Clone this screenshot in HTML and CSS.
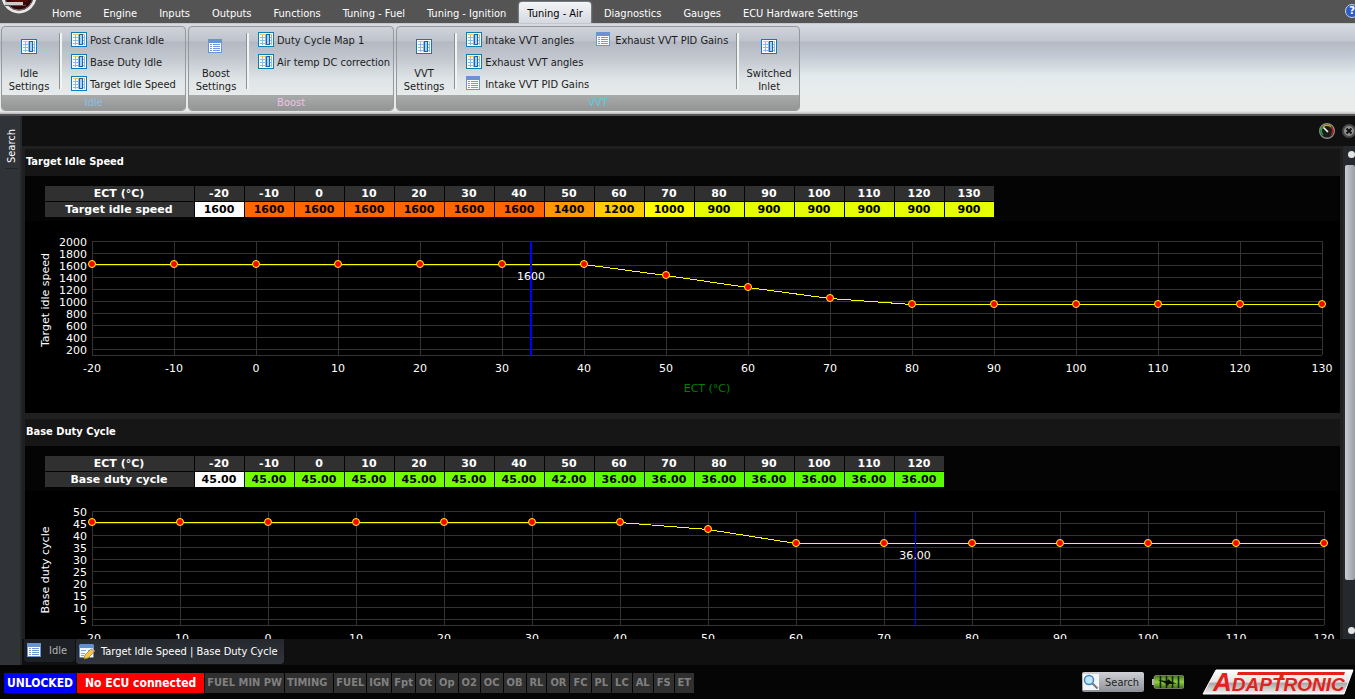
FILE: index.html
```html
<!DOCTYPE html>
<html lang="en">
<head>
    <meta charset="UTF-8">
    <meta name="viewport" content="width=device-width, initial-scale=1.0">
    <title>Adaptronic ECU</title>
    <link rel="stylesheet" href="styles.css">
</head>
<body>
    <!-- shared icons -->
    <svg class="defs" width="0" height="0">
        <defs>
            <linearGradient id="silver" x1="0" y1="0" x2="0" y2="1">
                <stop offset="0" stop-color="#fff"/>
                <stop offset=".5" stop-color="#e4e4e4"/>
                <stop offset=".55" stop-color="#a8a8a8"/>
                <stop offset="1" stop-color="#f4f4f4"/>
            </linearGradient>
            <linearGradient id="cell" x1="0" y1="0" x2="0" y2="1">
                <stop offset="0" stop-color="#47751c"/>
                <stop offset=".5" stop-color="#8fd03a"/>
                <stop offset="1" stop-color="#3d6815"/>
            </linearGradient>
            <radialGradient id="ruby">
                <stop offset="0" stop-color="#7a0808"/>
                <stop offset="1" stop-color="#1d0505"/>
            </radialGradient>
        </defs>
        <symbol id="i-table" viewBox="0 0 16 16">
            <rect x=".5" y=".5" width="15" height="14" fill="#fff" stroke="#0a7cb8"/>
            <path d="M2 2.5h12" stroke="#f3c25b"/>
            <path d="M2 5.5h12M2 8.5h12M2 11.5h12M4.5 3v10M7.500 3v10M13.500 3v10" stroke="#8dbbe0"/>
            <rect x="8.500" y="2.500" width="3" height="10" fill="#a9d1f5" stroke="#1763b0"/>
        </symbol>
        <symbol id="i-list" viewBox="0 0 16 16">
            <rect x=".5" y=".5" width="13" height="13" fill="#fff" stroke="#6a93cf"/>
            <path d="M0 0h14v4H0z" fill="#6a93cf"/>
            <path d="M2 5.500h2M2 7.500h2M2 9.500h2M2 11.500h2M5 5.500h7M5 7.500h7M5 9.500h7M5 11.500h7" stroke="#6f9bdc"/>
        </symbol>
        <symbol id="i-edit" viewBox="0 0 16 16">
            <rect x=".5" y=".5" width="14" height="13" rx="1" fill="#f4f8fe" stroke="#5f90d6"/>
            <path d="M0 1h15v3H0z" fill="#5f90d6"/>
            <path d="M2 6.500h5M9 6.500h4M2 9.500h4M2 11.500h3" stroke="#7ba7df"/>
            <path d="M5 15l1-4 6-6 3 3-6 6z" fill="#f1c552" stroke="#a9741c" stroke-width=".7"/>
            <path d="M12 5l1-1 3 3-1 1z" fill="#e9a9a0"/>
        </symbol>
    </svg>

    <header class="menubar">
        <svg class="app-logo" width="41" height="16" viewBox="0 0 41 16">
            <circle cx="19" cy="-4" r="16" fill="url(#ruby)" stroke="#e8e8e8" stroke-width="3"/>
            <circle cx="19" cy="-4" r="14" fill="none" stroke="#777"/>
            <path d="M5 3.500h18" stroke="#ccc" stroke-width="3"/>
            <path d="M5 5.500h21" stroke="#555" stroke-width="1"/>
        </svg>
        <nav class="tabs">
            <a href="#">Home</a>
            <a href="#">Engine</a>
            <a href="#">Inputs</a>
            <a href="#">Outputs</a>
            <a href="#">Functions</a>
            <a href="#">Tuning - Fuel</a>
            <a href="#">Tuning - Ignition</a>
            <a href="#" class="active">Tuning - Air</a>
            <a href="#">Diagnostics</a>
            <a href="#">Gauges</a>
            <a href="#">ECU Hardware Settings</a>
        </nav>
        <button class="help" aria-label="Help">?</button>
    </header>

    <section class="ribbon">
        <div class="group">
            <div class="group-body">
                <button class="big"><svg class="ico"><use href="#i-table"/></svg><span>Idle<br>Settings</span></button>
                <div class="items">
                    <button class="item"><svg class="ico"><use href="#i-table"/></svg>Post Crank Idle</button>
                    <button class="item"><svg class="ico"><use href="#i-table"/></svg>Base Duty Idle</button>
                    <button class="item"><svg class="ico"><use href="#i-table"/></svg>Target Idle Speed</button>
                </div>
            </div>
            <div class="group-name idle">Idle</div>
        </div>
        <div class="group">
            <div class="group-body">
                <button class="big"><svg class="ico"><use href="#i-list"/></svg><span>Boost<br>Settings</span></button>
                <div class="items">
                    <button class="item"><svg class="ico"><use href="#i-table"/></svg>Duty Cycle Map 1</button>
                    <button class="item"><svg class="ico"><use href="#i-table"/></svg>Air temp DC correction</button>
                </div>
            </div>
            <div class="group-name boost">Boost</div>
        </div>
        <div class="group">
            <div class="group-body">
                <button class="big"><svg class="ico"><use href="#i-table"/></svg><span>VVT<br>Settings</span></button>
                <div class="items two">
                    <button class="item"><svg class="ico"><use href="#i-table"/></svg>Intake VVT angles</button>
                    <button class="item"><svg class="ico"><use href="#i-table"/></svg>Exhaust VVT angles</button>
                    <button class="item"><svg class="ico"><use href="#i-list"/></svg>Intake VVT PID Gains</button>
                    <button class="item"><svg class="ico"><use href="#i-list"/></svg>Exhaust VVT PID Gains</button>
                </div>
                <button class="big last"><svg class="ico"><use href="#i-table"/></svg><span>Switched<br>Inlet</span></button>
            </div>
            <div class="group-name vvt">VVT</div>
        </div>
    </section>

    <main class="work">
        <aside class="side"><button class="side-tab">Search</button></aside>
        <div class="document">
            <div class="toolbar">
                <button aria-label="Gauge">
                    <svg width="16" height="16" viewBox="0 0 16 16">
                        <circle cx="8" cy="8" r="7.300" fill="#1a1c1a" stroke="#8b8b8b" stroke-width="1.400"/>
                        <path d="M4 12A5.500 5.500 0 0 1 4 4" fill="none" stroke="#12a83c" stroke-width="1.500"/>
                        <path d="M4 4A5.500 5.500 0 0 1 12 4" fill="none" stroke="#b9a713" stroke-width="1.500"/>
                        <path d="M12 4A5.500 5.500 0 0 1 12 12" fill="none" stroke="#c41616" stroke-width="1.500"/>
                        <path d="M4.500 4.500L9 9" stroke="#fff" stroke-width="1.600"/>
                    </svg>
                </button>
                <button aria-label="Close">
                    <svg width="14" height="14" viewBox="0 0 14 14">
                        <circle cx="7" cy="7" r="6" fill="#8e8e8e" stroke="#484848" stroke-width="2"/>
                        <path d="M4.500 4.500l5 5M9.500 4.500l-5 5" stroke="#111" stroke-width="2"/>
                    </svg>
                </button>
            </div>
            <div class="view">
                <div class="panels">
                    <section class="panel">
                        <h2>Target Idle Speed</h2>
                        <div class="table-box"><table id="idle-table"></table></div>
                        <div class="chart" id="idle-chart"></div>
                    </section>
                    <section class="panel">
                        <h2>Base Duty Cycle</h2>
                        <div class="table-box"><table id="duty-table"></table></div>
                        <div class="chart" id="duty-chart"></div>
                    </section>
                </div>
                <div class="scrollbar">
                    <span class="dot"></span>
                    <span class="track"><span class="thumb"></span></span>
                    <span class="dot"></span>
                </div>
            </div>
            <div class="doc-tabs">
                <button class="doc-tab"><svg class="ico"><use href="#i-list"/></svg>Idle</button>
                <button class="doc-tab active"><svg class="ico"><use href="#i-edit"/></svg>Target Idle Speed | Base Duty Cycle</button>
            </div>
        </div>
    </main>

    <footer class="status">
        <div class="flags">
            <span class="flag blue">UNLOCKED</span>
            <span class="flag red">No ECU connected</span>
            <span class="flag long">FUEL MIN PW</span>
            <span class="flag long wide">TIMING</span>
            <span class="flag long">FUEL</span>
            <span class="flag long">IGN</span>
            <span class="flag long">Fpt</span>
            <span class="flag">Ot</span>
            <span class="flag">Op</span>
            <span class="flag">O2</span>
            <span class="flag">OC</span>
            <span class="flag">OB</span>
            <span class="flag">RL</span>
            <span class="flag">OR</span>
            <span class="flag">FC</span>
            <span class="flag">PL</span>
            <span class="flag">LC</span>
            <span class="flag">AL</span>
            <span class="flag">FS</span>
            <span class="flag">ET</span>
        </div>
        <button class="search">
            <svg width="16" height="16" viewBox="0 0 16 16">
                <path d="M0 0h16v16H0z" fill="#f3f5f7"/>
                <path d="M9 9l5.500 5.500" stroke="#777" stroke-width="2"/>
                <circle cx="6" cy="6" r="4.500" fill="#bfe6fa" stroke="#3f86c9" stroke-width="1.500"/>
            </svg>
            Search
        </button>
        <svg class="battery" width="32" height="14" viewBox="0 0 32 14">
            <path d="M0 4h3v6H0z" fill="#b9b9b9"/>
            <rect x="2" y=".5" width="30" height="13" rx="2" fill="url(#cell)" stroke="#a5a5a5" stroke-width=".6"/>
            <path d="M8.500 1v12M14.500 1v12M20.500 1v12M26.500 1v12" stroke="#16240b" stroke-width="1.600"/>
            <path d="M6 5l9 1 1-2 4 3 5 1.500-8 .5-1 2-3-3z" fill="#0a0f05"/>
        </svg>
        <svg class="brand" width="152" height="26" viewBox="0 0 152 26">
            <path d="M14 1H151L142 25H1z" fill="url(#silver)" stroke="#fff"/>
            <text x="11" y="22" class="brand-text"><tspan class="brand-cap">A</tspan>DAPTRONIC</text>
            <path d="M36 3h107l-1 3H35z" fill="#e3221d"/>
            <path d="M78 5h4l-1 5h-4z" fill="#e3221d"/>
        </svg>
    </footer>
    <script src="script.js"></script>
</body>
</html>
```
FILE: styles.css
```css
*{
    box-sizing: border-box;
}
body{
    margin: 0;
    height: 100vh;
    display: flex;
    flex-direction: column;
    overflow: hidden;
    background-color: #050505;
    font-family: "DejaVu Sans Condensed", "DejaVu Sans", sans-serif;
    font-size: 11px;
    line-height: 13px;
}
button{
    font: inherit;
    color: inherit;
    background: none;
    border: none;
    padding: 0;
    margin: 0;
}
.defs{
    position: absolute;
}
.ico{
    width: 16px;
    height: 16px;
    flex: none;
}
/* top menu */
.menubar{
    height: 23px;
    flex: none;
    display: flex;
    background-color: #545454;
}
.app-logo{
    flex: none;
}
.tabs{
    display: flex;
    flex: 1;
    padding-top: 2px;
}
.tabs a{
    color: #fff;
    text-decoration: none;
    padding: 5px 11px 0;
    white-space: nowrap;
}
.tabs a.active{
    color: #000;
    padding: 5px 8px 0;
    margin: 0 2px;
    background: linear-gradient(#f4f5f7, #d5d8e0);
    border-radius: 3px 3px 0 0;
    box-shadow: 0 0 2px #cfe6ef;
}
.help{
    width: 14px;
    height: 14px;
    margin: 4px -4px 0 0;
    border-radius: 50%;
    border: 1px solid #c8d2ea;
    background-color: #2c5cc0;
    color: #fff;
    font-weight: bold;
    line-height: 12px;
}
/* ribbon */
.ribbon{
    height: 93px;
    flex: none;
    display: flex;
    gap: 2px;
    padding: 2px 1px;
    border-top: 1px solid #c5c7cb;
    border-bottom: 2px solid #545454;
    background: linear-gradient(#d8dbe3 0, #c2c6d0 17px, #b3bac5 18px, #c6ccd5 34px, #e2ebec 52px, #e9ecec 70px, #eaebea 87px, #b8b8b8 90px);
}
.group{
    display: flex;
    flex-direction: column;
    border: 1px solid #96989b;
    border-radius: 4px;
    height: 85px;
    overflow: hidden;
    background: linear-gradient(#d0d3db 0, #bfc3cc 14px, #b3b8c2 15px, #c3c8d0 32px, #dfe4e6 52px, #e8ebeb 69px);
    color: #1c1c1c;
}
.group-body{
    display: flex;
    height: 68px;
}
.group-name{
    flex: 1;
    text-align: center;
    line-height: 15px;
    background: linear-gradient(#a8abaa, #949695);
}
.idle{
    color: #86bfe8;
}
.boost{
    color: #ecc3e6;
}
.vvt{
    color: #5cc6e4;
}
.big{
    width: 54px;
    display: flex;
    flex-direction: column;
    align-items: center;
    gap: 12px;
    padding-top: 12px;
}
.items{
    display: grid;
    grid-template-rows: repeat(3, 22px);
    grid-auto-flow: column;
    margin: 6px 0 0 4px;
    padding: 0 3px 0 9px;
    min-width: 125px;
    height: 56px;
    border-left: 2px solid #f2f3f3;
    box-shadow: -1px 0 #8f9296;
}
.items.two{
    grid-template-columns: 130px 138px;
}
.item{
    display: flex;
    align-items: center;
    gap: 3px;
    height: 16px;
    margin-top: -1px;
    white-space: nowrap;
}
.big.last{
    width: 62px;
    height: 56px;
    margin-top: 6px;
    padding-top: 6px;
    border-left: 2px solid #f2f3f3;
    box-shadow: -1px 0 #8f9296;
}
/* work area */
.work{
    flex: 1;
    min-height: 0;
    display: flex;
}
.side{
    width: 22px;
    flex: none;
    background-color: #303338;
    border-right: 2px solid #26282c;
}
.side-tab{
    writing-mode: vertical-rl;
    transform: rotate(180deg);
    color: #fff;
    margin: 9px 2px 0 5px;
    padding: 4px 0;
    height: 44px;
    border-top: 1px solid #22252a;
}
.document{
    flex: 1;
    min-width: 0;
    display: flex;
    flex-direction: column;
    background-color: #101010;
}
.toolbar{
    height: 30px;
    flex: none;
    display: flex;
    justify-content: flex-end;
    align-items: center;
    gap: 7px;
}
.toolbar button{
    display: flex;
}
.toolbar button:last-child{
    margin-right: -1px;
}
.view{
    flex: 1;
    min-height: 0;
    display: flex;
    background-color: #202020;
}
.panels{
    flex: 1;
    min-width: 0;
    overflow: hidden;
    padding: 3px 3px 0;
}
.panel{
    margin-bottom: 6px;
    background-color: #000;
}
.panel h2{
    margin: 0;
    height: 27px;
    padding: 0 1px;
    line-height: 25px;
    font-size: 11px;
    color: #fff;
    background-color: #161616;
}
.table-box{
    height: 45px;
    padding: 9px 19px 0;
    background-color: #040404;
    font-family: "DejaVu Sans", sans-serif;
}
table{
    table-layout: fixed;
    width: min-content;
    border-collapse: separate;
    border-spacing: 1px;
    font-size: 11px;
    font-weight: bold;
    line-height: 15px;
    text-align: center;
}
th, td{
    width: 49px;
    min-width: 49px;
    height: 15px;
    padding: 0 1px 0 0;
    color: #000;
}
thead th, tbody th{
    color: #fff;
    background-color: #303030;
}
th:first-child{
    width: 149px;
    min-width: 149px;
}
.v1600{ background-color: #ff6600; }
.v1400{ background-color: #ff9900; }
.v1200{ background-color: #ffcc00; }
.v1000{ background-color: #ffff00; }
.v900{ background-color: #e6ff00; }
.v45{ background-color: #73ff00; }
.v42{ background-color: #66ff00; }
.v36{ background-color: #59ff00; }
td.selected{
    background-color: #fff;
}
.chart{
    height: 192px;
}
.chart svg{
    display: block;
    width: 100%;
    height: 192px;
    font-family: "DejaVu Sans", sans-serif;
    font-size: 11px;
    fill: #fff;
}
.grid{
    stroke: #333;
    fill: none;
    shape-rendering: crispEdges;
}
.line{
    stroke: #ff0;
    fill: none;
    shape-rendering: crispEdges;
}
.point{
    fill: #f00;
    stroke: #ff0;
}
.cursor{
    stroke: #00f;
    shape-rendering: crispEdges;
}
.axis-name{
    fill: #008000;
}
.center{
    text-anchor: middle;
}
.end{
    text-anchor: end;
}
/* scrollbar */
.scrollbar{
    width: 12px;
    flex: none;
    display: flex;
    flex-direction: column;
    padding: 5px 0 5px 2px;
    background-color: #25282d;
}
.dot{
    width: 7px;
    height: 7px;
    margin-left: 3px;
    border-radius: 50%;
    background-color: #e4e4e4;
}
.track{
    flex: 1;
    padding: 7px 0 47px;
    display: flex;
}
.thumb{
    flex: 1;
    border-radius: 2px;
    background: linear-gradient(90deg, #c9ccd2, #9a9da3);
}
/* document tabs */
.doc-tabs{
    height: 26px;
    flex: none;
    display: flex;
    padding-left: 2px;
}
.doc-tab{
    display: flex;
    align-items: center;
    gap: 6px;
    height: 23px;
    padding: 0 8px 0 3px;
    color: #b5b5b5;
    background-color: #1d2024;
    border-radius: 0 0 4px 4px;
}
.doc-tab.active{
    height: 25px;
    margin-left: 1px;
    padding-right: 6px;
    color: #fff;
    background: linear-gradient(#24272c, #32363c);
}
/* status bar */
.status{
    height: 34px;
    flex: none;
    display: flex;
    align-items: center;
    padding: 0 1px 0 4px;
}
.flags{
    flex: 1;
    display: flex;
    gap: 1px;
    padding-top: 2px;
    font-weight: bold;
}
.flag{
    height: 20px;
    padding: 0 3px;
    line-height: 20px;
    color: #808080;
    background-color: #303030;
    white-space: nowrap;
}
.flag.long{
    padding: 0 2px;
}
.flag.wide{
    padding-right: 6px;
}
.flag.blue{
    padding: 0 3px;
    font-size: 12px;
    color: #fff;
    background-color: #00f;
}
.flag.red{
    padding: 0 8px;
    font-size: 12px;
    color: #fff;
    background-color: #f00;
}
.search{
    display: flex;
    align-items: center;
    gap: 6px;
    width: 62px;
    height: 20px;
    padding-left: 1px;
    border-radius: 2px;
    color: #222;
    background: linear-gradient(#cfd1d6, #8d9096);
}
.battery{
    margin: 0 18px 0 8px;
}
.brand-text{
    font-family: "Liberation Sans", sans-serif;
    font-size: 19px;
    font-weight: bold;
    font-style: italic;
    fill: #e3221d;
}
.brand-cap{
    font-size: 26px;
}
```
FILE: script.js
```javascript
const idle = {
    name: 'Target idle speed',
    x: [-20, -10, 0, 10, 20, 30, 40, 50, 60, 70, 80, 90, 100, 110, 120, 130],
    y: [1600, 1600, 1600, 1600, 1600, 1600, 1600, 1400, 1200, 1000, 900, 900, 900, 900, 900, 900],
    digits: 0,
    max: 2000,
    step: 200,
    cursor: { at: 5.35, width: 2, label: '1600' }
};
const duty = {
    name: 'Base duty cycle',
    x: [-20, -10, 0, 10, 20, 30, 40, 50, 60, 70, 80, 90, 100, 110, 120],
    y: [45, 45, 45, 45, 45, 45, 45, 42, 36, 36, 36, 36, 36, 36, 36],
    digits: 2,
    max: 50,
    step: 5,
    cursor: { at: 9.35, width: 1, label: '36.00' }
};

function drawTable(id, data) {
    let head = data.x.map(v => `<th scope="col">${v}</th>`).join('');
    let cells = data.y.map((v, i) => `<td class="v${v}${i === 0 ? ' selected' : ''}">${v.toFixed(data.digits)}</td>`).join('');
    document.getElementById(id).innerHTML =
        `<thead><tr><th scope="col">ECT (°C)</th>${head}</tr></thead>` +
        `<tbody><tr><th scope="row">${data.name}</th>${cells}</tr></tbody>`;
}

function drawChart(id, data) {
    let box = document.getElementById(id);
    let left = 67, top = 20, height = 114;
    let bottom = top + height;
    let n = data.x.length - 1;
    let stepX = Math.floor((box.clientWidth - left - 16) / n);
    let right = left + stepX * n;
    let px = i => left + stepX * i;
    let py = v => Math.round(bottom - height * v / data.max);

    let grid = '';
    let labels = '';
    for (let i = 0; i < 10; i++) {
        let y = top + i * 12;
        grid += `M${left} ${y + 0.5}H${right}`;
        labels += `<text class="end" x="${left - 5}" y="${y + 5}">${data.max - data.step * i}</text>`;
    }
    grid += `M${left} ${bottom + 0.5}H${right}`;
    data.x.forEach((v, i) => {
        grid += `M${px(i) + 0.5} ${top}V${bottom}`;
        labels += `<text class="center" x="${px(i)}" y="${bottom + 17}">${v}</text>`;
    });

    let points = data.y.map((v, i) => `${px(i)},${py(v) + 0.5}`).join(' ');
    let dots = data.y.map((v, i) => `<circle class="point" cx="${px(i)}" cy="${py(v)}" r="3.5"/>`).join('');
    let cx = Math.round(px(data.cursor.at));
    let cy = py(data.y[Math.floor(data.cursor.at)]);
    let lineX = cx + (data.cursor.width % 2) / 2;

    box.innerHTML = `<svg>
        <path class="grid" d="${grid}"/>
        <polyline class="line" points="${points}"/>
        ${dots}
        <line class="cursor" x1="${lineX}" x2="${lineX}" y1="${top}" y2="${bottom + 1}" stroke-width="${data.cursor.width}"/>
        <text class="center" x="${cx}" y="${cy + 16}">${data.cursor.label}</text>
        ${labels}
        <text class="center" transform="translate(24 ${top + 59}) rotate(-90)">${data.name}</text>
        <text class="center axis-name" x="${(left + right) / 2}" y="${bottom + 37}">ECT (°C)</text>
    </svg>`;
}

function drawAll() {
    drawChart('idle-chart', idle);
    drawChart('duty-chart', duty);
}

drawTable('idle-table', idle);
drawTable('duty-table', duty);
drawAll();
window.addEventListener('resize', drawAll);
```
